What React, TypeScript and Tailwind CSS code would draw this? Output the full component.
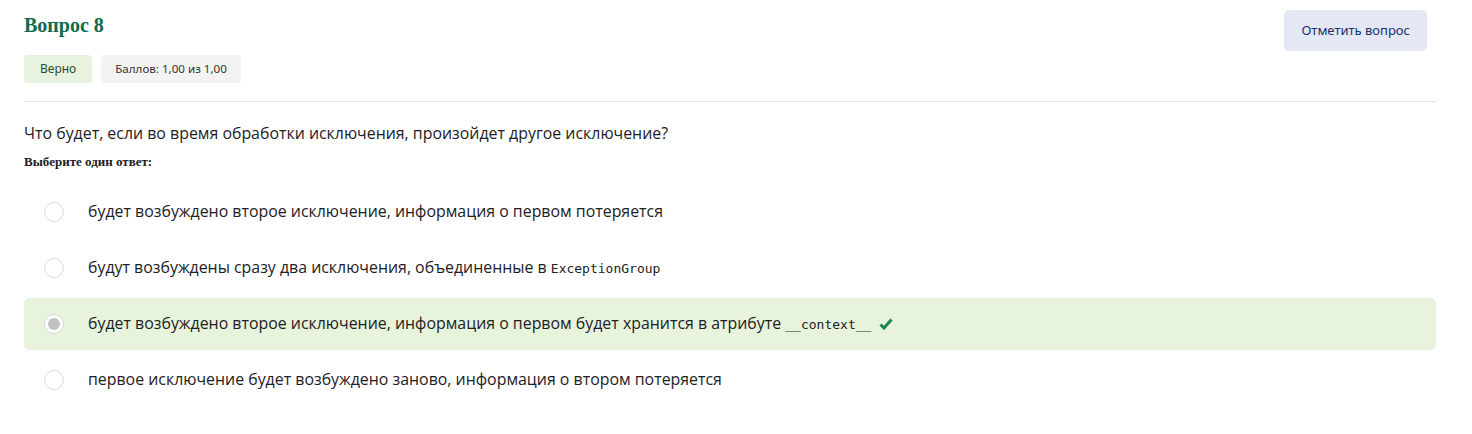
import React from "react";

const options = [
  { text: "будет возбуждено второе исключение, информация о первом потеряется" },
  { text: "будут возбуждены сразу два исключения, объединенные в ", code: "ExceptionGroup" },
  {
    text: "будет возбуждено второе исключение, информация о первом будет хранится в атрибуте ",
    code: "__context__",
    correct: true,
  },
  { text: "первое исключение будет возбуждено заново, информация о втором потеряется" },
];

export default function App() {
  return (
    <div className="w-[1472px] h-[434px] bg-white pl-6 pr-9 pt-[10px]" style={{ fontFamily: '"Open Sans", sans-serif' }}>
      <div className="flex justify-between">
        <div>
          <h3
            className="text-[20px] leading-[28px] font-bold text-[#0f6b4a] mt-[1px]"
            style={{ fontFamily: '"Liberation Serif", serif' }}
          >
            Вопрос 8
          </h3>
          <div className="flex gap-[9px] mt-[16px]" style={{ fontFamily: '"Noto Sans", sans-serif' }}>
            <span className="h-[28px] px-4 flex items-center rounded-[4px] bg-[#e7f3de] text-[#1f4d33] text-[12px]">Верно</span>
            <span className="h-[28px] px-[14px] flex items-center rounded-[4px] bg-[#f3f3f3] text-[#333] text-[11.6px]">Баллов: 1,00 из 1,00</span>
          </div>
        </div>
        <button
          className="h-[41px] px-[17px] mr-[9px] rounded-[5px] bg-[#e3e8f4] text-[#1d2f6b] text-[13px]"
          style={{ fontFamily: '"Noto Sans", sans-serif' }}
        >
          Отметить вопрос
        </button>
      </div>
      <div className="h-px bg-[#dee2e6] mt-[18px]" />
      <div className="mt-[20px] text-[15.9px] leading-[22px] text-[#1d2125]">
        Что будет, если во время обработки исключения, произойдет другое исключение?
      </div>
      <div
        className="mt-[10px] text-[13px] leading-[16px] font-bold text-[#1d2125]"
        style={{ fontFamily: '"Liberation Serif", serif' }}
      >
        Выберите один ответ:
      </div>
      <div className="mt-[16px] flex flex-col gap-1">
        {options.map((o, i) => (
          <div
            key={i}
            className={`h-[52px] flex items-center rounded-[5px] ${o.correct ? "bg-[#e8f3dc]" : ""}`}
          >
            <span className="ml-5 w-5 h-5 rounded-full border border-[#d9d9d9] bg-white flex items-center justify-center shrink-0">
              {o.correct && <span className="w-[12px] h-[12px] rounded-full bg-[#c2c2c2]" />}
            </span>
            <span className="ml-6 text-[15.9px] text-[#1d2125] whitespace-nowrap">
              {o.text}
              {o.code && (
                <code className="text-[13px] text-[#1d2125]" style={{ fontFamily: '"DejaVu Sans Mono", monospace' }}>
                  {o.code}
                </code>
              )}
              {o.correct && (
                <svg className="inline-block ml-[8px] align-[-1px]" width="14" height="12" viewBox="0 0 14 12">
                  <path d="M1.5 6.5 L5 10 L12.5 1.5" fill="none" stroke="#198754" strokeWidth="3" />
                </svg>
              )}
            </span>
          </div>
        ))}
      </div>
    </div>
  );
}
